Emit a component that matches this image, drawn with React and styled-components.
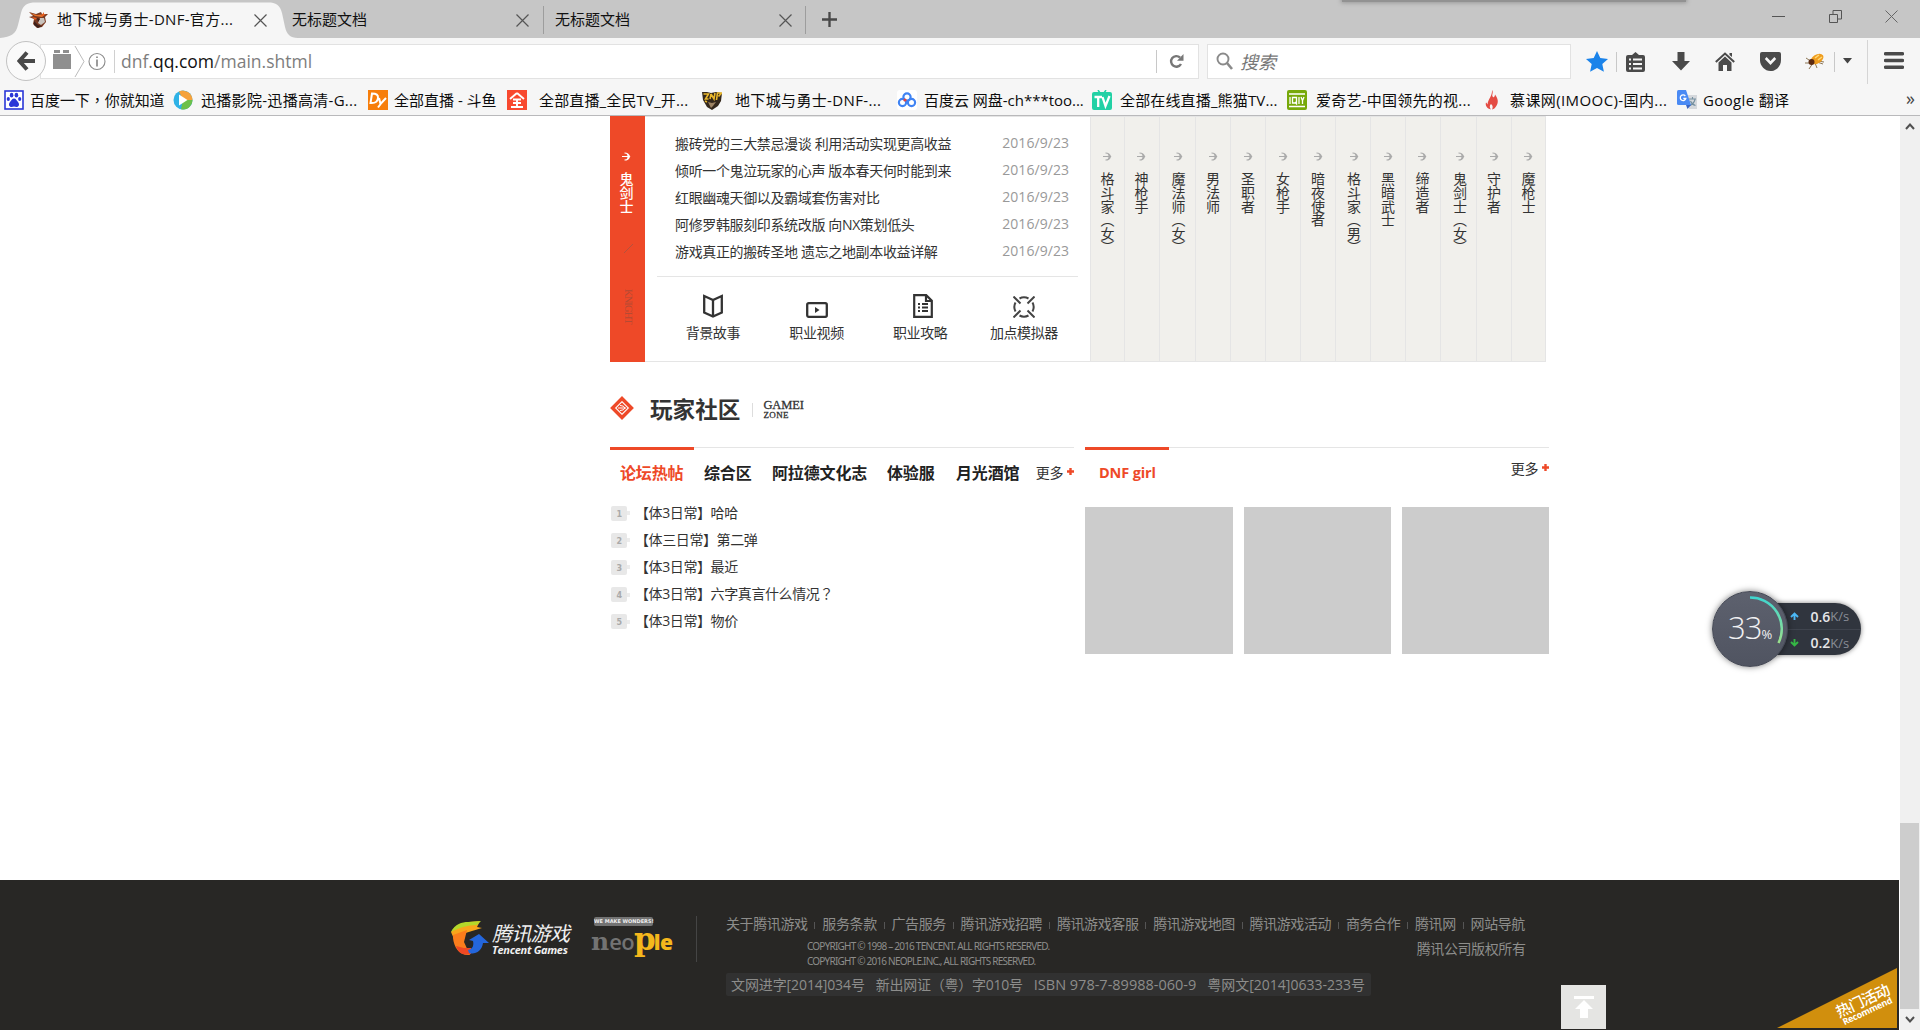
import React from "react";
import styled, { createGlobalStyle } from "styled-components";

const sans = `"Open Sans", "Noto Sans", "Noto Sans CJK SC", sans-serif`;
const RED = "#ee4928";

const Global = createGlobalStyle`
  * { box-sizing: border-box; }
  body { margin: 0; overflow: hidden; background: #fff; font-family: ${sans}; text-spacing-trim: space-all; }
  ul { list-style: none; margin: 0; padding: 0; }
  svg { display: block; flex: none; }
`;

const Window = styled.div`
  position: relative;
  width: 1920px;
  height: 1030px;
  overflow: hidden;
  display: flex;
  flex-direction: column;
  background: #fff;
  white-space: nowrap;
`;
/* Punctuation centred in its em box */
const Mid = styled.span`
  font-family: "Noto Sans CJK TC", sans-serif;
  line-height: 1;
`;

/* ---------- Tab strip ---------- */
const TabStrip = styled.header`
  height: 38px;
  flex: none;
  display: flex;
  background: #c6c6c6;
`;
const ActiveTab = styled.div`
  position: relative;
  width: 292px;
  height: 38px;
  padding: 2px 0 0 29px;
  display: flex;
  align-items: center;
  font-size: 15px;
`;
const TabShape = styled.svg`
  position: absolute;
  left: 0;
  top: 0;
`;
const TabTitle = styled.span`
  position: relative;
  width: ${(p) => p.$w}px;
  margin-left: ${(p) => p.$ml || 0}px;
  padding-bottom: 2px;
  letter-spacing: ${(p) => p.$ls || 0}px;
  color: #111;
  font-size: 15px;
  line-height: 22px;
`;
const Tab = styled.div`
  width: ${(p) => p.$w}px;
  height: 38px;
  padding: 2px 0 0 ${(p) => p.$pl}px;
  display: flex;
  align-items: center;
`;
const TabDivider = styled.i`
  width: 1px;
  height: 28px;
  margin-top: 6px;
  background: #9d9d9d;
`;
const NewTab = styled.div`
  padding: 12px 0 0 16px;
`;
const WindowButtons = styled.div`
  margin-left: auto;
  padding: 10px 22px 0 0;
  display: flex;
  gap: 43.5px;
`;
const TopShadow = styled.i`
  position: absolute;
  left: 1342px;
  top: -6px;
  width: 344px;
  height: 8px;
  background: #929292;
  box-shadow: 0 0 4px 1px #999;
`;

/* ---------- Navigation bar ---------- */
const NavBar = styled.div`
  height: 46px;
  flex: none;
  display: flex;
  background: #f6f6f6;
`;
const BackSlot = styled.div`
  width: 40px;
  padding: 3px 0 0 6px;
  position: relative;
  z-index: 1;
`;
const BackButton = styled.div`
  width: 40px;
  height: 40px;
  border: 1px solid #c2c2c2;
  border-radius: 50%;
  background: #fafafa;
  display: flex;
  align-items: center;
  justify-content: center;
`;
const UrlBar = styled.div`
  margin-top: 6px;
  width: 1159px;
  height: 35px;
  border: 1px solid #e2e2e2;
  background: #fff;
  display: flex;
  align-items: center;
  padding-left: 12px;
  padding-bottom: 1px;
`;
const VLine = styled.i`
  flex: none;
  width: 1px;
  height: ${(p) => p.$h}px;
  background: ${(p) => p.$c || "#c8c8c8"};
  margin: ${(p) => p.$m || 0};
`;
const Url = styled.span`
  margin-left: 6px;
  width: 1035px;
  font-size: 17.5px;
  letter-spacing: 0;
  line-height: 24px;
  color: #7d7d7d;
  b { font-weight: 400; color: #111; }
`;
const SearchBox = styled.div`
  margin: 6px 0 0 8px;
  width: 364px;
  height: 35px;
  border: 1px solid #e2e2e2;
  background: #fff;
  display: flex;
  align-items: center;
  padding: 0 0 1px 8px;
  gap: 7px;
  font-size: 18px;
  font-style: italic;
  color: #777;
`;
const Tools = styled.div`
  display: flex;
  align-items: center;
  padding: 1px 0 0 15px;
`;
const ToolIcon = styled.div`
  width: 22px;
  margin-left: ${(p) => p.$ml || 0}px;
  margin-right: ${(p) => p.$mr}px;
  display: flex;
  justify-content: center;
`;

/* ---------- Bookmarks ---------- */
const Bookmarks = styled.nav`
  height: 32px;
  flex: none;
  display: flex;
  align-items: center;
  padding-left: 4px;
  background: #f6f6f6;
  border-bottom: 1px solid #b9b9bb;
`;
const Bookmark = styled.a`
  width: ${(p) => p.$w}px;
  flex: none;
  display: flex;
  align-items: center;
  font-size: 15px;
  line-height: 24px;
  color: #0c0c0c;
  letter-spacing: ${(p) => p.$ls || 0}px;
  svg { margin-right: ${(p) => p.$gap}px; }
`;
const MoreMarks = styled.span`
  margin: -4px 0 0 39px;
  font-size: 18px;
  color: #444;
`;

/* ---------- Page ---------- */
const Viewport = styled.div`
  flex: 1;
  min-height: 0;
  display: flex;
`;
const Page = styled.main`
  width: 1900px;
  display: flex;
  flex-direction: column;
`;
const Scrollbar = styled.aside`
  width: 20px;
  padding: 7px 0 0;
  background: #f0f0f0;
  display: flex;
  flex-direction: column;
  align-items: center;
`;
const Thumb = styled.div`
  flex: none;
  width: 19px;
  height: 186px;
  margin: 693px 1px 7px 0;
  background: #cdcdcd;
`;
const Jobs = styled.section`
  height: 246px;
  margin-left: 610px;
  display: flex;
`;
const ActiveJob = styled.div`
  width: 35px;
  background: ${RED};
  display: flex;
  flex-direction: column;
  align-items: center;
  padding: 36px 2px 0 0;
  color: #fff;
`;
const Vertical = styled.span`
  writing-mode: vertical-rl;
  text-orientation: ${(p) => (p.$side ? "sideways" : "mixed")};
  font-size: ${(p) => p.$size || 14}px;
  line-height: 16px;
  letter-spacing: ${(p) => p.$ls ?? -0.4}px;
  margin: ${(p) => p.$m || "11px 0 0"};
  color: ${(p) => p.$c || "inherit"};
  font-weight: ${(p) => p.$weight || 400};
  font-family: ${(p) => (p.$serif ? `"Liberation Serif", serif` : `"Noto Sans CJK SC", sans-serif`)};
`;
const JobPanel = styled.div`
  width: 445px;
  border: solid #e5e5e5;
  border-width: 1px 0;
  padding: 12px 12px 0;
`;
const ArticleRow = styled.li`
  height: 27px;
  display: flex;
  justify-content: space-between;
  align-items: center;
  padding: 0 9px 0 18px;
  font-size: 14px;
  letter-spacing: -0.36px;
  color: #333;
  time { color: #999; letter-spacing: 0.05px; }
`;
const JobLinks = styled.div`
  display: flex;
  border-top: 1px solid #e5e5e5;
  margin-top: 12px;
  padding-left: 4px;
`;
const JobLink = styled.a`
  width: 103.7px;
  height: 66px;
  display: flex;
  flex-direction: column;
  align-items: center;
  justify-content: flex-end;
  font-size: 14px;
  line-height: 20px;
  letter-spacing: -0.4px;
  color: #333;
  svg { margin-bottom: 5px; margin-left: ${(p) => p.$shift}px; }
`;
const JobColumn = styled.div`
  width: ${(p) => p.$w}px;
  border: solid #e5e5e5;
  border-width: 1px 0 1px 1px;
  background: #f1f0ec;
  display: flex;
  flex-direction: column;
  align-items: center;
  padding: 35px ${(p) => Math.max(-p.$shift, 0)}px 0 ${(p) => Math.max(p.$shift, 0)}px;
  color: #333;
  &:last-child { border-right-width: 1px; }
`;

const SectionTitle = styled.h2`
  margin: 28px 0 0 610px;
  height: 36px;
  display: flex;
  align-items: center;
  font-size: 22.6px;
  font-weight: 700;
  color: #333;
`;
const TitleText = styled.span`
  margin: 0 12px 0 16px;
`;
const EnglishTitle = styled.span`
  margin: 3px 0 0 10px;
  display: flex;
  flex-direction: column;
  font: 12.5px/11px "Liberation Serif", serif;
  letter-spacing: -0.1px;
  -webkit-text-stroke: 0.3px #333;
  color: #333;
  small { font-size: 9px; line-height: 8px; letter-spacing: 0.4px; }
`;
const Community = styled.section`
  display: flex;
  gap: 11px;
  margin: 21px 0 0 610px;
`;
const Column = styled.div`
  width: 464px;
`;
const Tabs = styled.div`
  height: 60px;
  border-top: 1px solid #e5e5e5;
  display: flex;
  font-size: 16px;
  line-height: 24px;
  font-weight: 700;
  color: #222;
`;
const TabLabel = styled.span`
  margin-top: -1px;
  padding: ${(p) => (p.$on ? 11 : 14)}px 0 0 ${(p) => p.$pl}px;
  width: ${(p) => p.$w}px;
  font-size: ${(p) => p.$size || 16}px;
  letter-spacing: ${(p) => p.$ls ?? -0.15}px;
  ${(p) => p.$on && `border-top: 3px solid ${RED}; color: ${RED};`}
`;
const More = styled.span`
  margin-left: auto;
  padding-top: ${(p) => p.$pt}px;
  display: flex;
  align-items: flex-start;
  gap: 4px;
  font-size: 14px;
  line-height: 20px;
  font-weight: 400;
  letter-spacing: -0.4px;
  color: #333;
  svg { margin-top: 5px; }
`;
const Posts = styled.ul`
  margin-top: -7.5px;
`;
const Post = styled.li`
  height: 27.2px;
  display: flex;
  align-items: center;
  padding-left: 1px;
  font-size: 14px;
  line-height: 20px;
  letter-spacing: -0.4px;
  color: #333;
  span { margin-top: -1px; }
`;
const Rank = styled.i`
  width: 16px;
  height: 15px;
  margin-right: 8px;
  border-radius: 2px;
  background: #e8e8e8;
  color: #aaa;
  font: 700 8px/17px "DejaVu Sans", sans-serif;
  text-align: center;
`;
const Pointer = styled.i`
  width: 3px;
  height: 4px;
  margin-left: -8px;
  margin-right: 5px;
  background: #ececec;
`;
const Pictures = styled.div`
  display: flex;
  gap: 11px;
`;
const Picture = styled.div`
  width: ${(p) => p.$w}px;
  height: 147px;
  background: #ccc;
`;

/* ---------- Footer ---------- */
const Footer = styled.footer`
  margin-top: auto;
  height: 150px;
  width: 1899px;
  background: #282725;
  display: flex;
  padding: 34px 0 0 450px;
  color: #8d8d8b;
`;
const Logos = styled.div`
  display: flex;
  width: 246px;
  padding-top: 2px;
`;
const TencentName = styled.div`
  margin: 6px 0 0 2px;
  width: 80px;
  color: #f0f0f0;
  font: italic 400 20px/22px "Noto Sans CJK SC", sans-serif;
  letter-spacing: -0.7px;
  small { display: block; font: italic 700 11px/12px "Open Sans", sans-serif; letter-spacing: -0.3px; }
`;
const Neople = styled.div`
  margin: 1px 0 0 19px;
`;
const Balloon = styled.div`
  margin-left: 3px;
  width: 59px;
  height: 9px;
  border-radius: 2px;
  background: #737373;
  color: #eee;
  text-align: center;
  font: 700 5px/9px "DejaVu Sans", sans-serif;
`;
const Wordmark = styled.div`
  display: flex;
  align-items: baseline;
  height: 36px;
  margin-top: -4px;
  font: 600 22px/34px "Open Sans", sans-serif;
  color: #737373;
  letter-spacing: -0.6px;
  em { font: 700 25px/34px "DejaVu Serif", serif; letter-spacing: 0; }
  strong { color: #f5b81c; font-size: 21px; }
  strong:first-of-type { font: 700 31px/34px "DejaVu Serif", serif; letter-spacing: -2px; }
`;
const Legal = styled.div`
  width: 830px;
  padding-left: 29px;
`;
const FooterLinks = styled.div`
  display: flex;
  height: 20px;
  font-size: 14px;
  line-height: 20px;
  letter-spacing: -0.4px;
  a + a::before {
    content: "";
    display: inline-block;
    width: 1px;
    height: 7px;
    margin: 0 6.87px;
    background: #555;
  }
`;
const LegalRow = styled.div`
  display: flex;
  justify-content: space-between;
  width: 799.5px;
  padding: 5px 0 0 81px;
  height: 39px;
  font-size: 14px;
  line-height: 20px;
  letter-spacing: -0.4px;
`;
const Copyright = styled.div`
  font: 10px/15px "Noto Sans", sans-serif;
`;
const Line = styled.div`
  letter-spacing: ${(p) => p.$ls}px;
`;
const Licences = styled.div`
  width: 645px;
  height: 23px;
  border-radius: 2px;
  background: #313131;
  display: flex;
  justify-content: space-between;
  padding: 0 6px 0 5px;
  line-height: 23px;
`;
const Licence = styled.span`
  font-size: ${(p) => p.$size || 14}px;
  letter-spacing: ${(p) => p.$ls}px;
`;

/* ---------- Floating items ---------- */
const BackToTop = styled.div`
  position: absolute;
  left: 1561px;
  top: 985px;
  width: 45px;
  height: 44px;
  background: #e5e5e3;
  display: flex;
  align-items: center;
  justify-content: center;
`;
const Corner = styled.div`
  position: absolute;
  left: 1777px;
  top: 968px;
  width: 120px;
  height: 60px;
  background: #d18f0d;
  clip-path: polygon(100% 0, 100% 100%, 0 100%);
`;
const CornerText = styled.div`
  position: absolute;
  left: 56px;
  top: 24px;
  width: 62px;
  transform: rotate(-25deg);
  color: #fff;
  text-align: center;
  font: 500 15px/16px "Noto Sans CJK SC", sans-serif;
  letter-spacing: -0.8px;
  small { display: block; font: 700 9px/8px "Open Sans", sans-serif; letter-spacing: -0.3px; }
`;
const Monitor = styled.div`
  position: absolute;
  left: 1712px;
  top: 591px;
  width: 150px;
  height: 76px;
`;
const Speeds = styled.div`
  position: absolute;
  left: 38px;
  top: 12px;
  width: 111px;
  height: 52px;
  border-radius: 0 26px 26px 0;
  background: #30353e;
  box-shadow: 0 0 5px rgba(0, 0, 0, 0.5);
`;
const Speed = styled.div`
  height: 26px;
  padding-left: 40px;
  display: flex;
  align-items: center;
  font-size: 14px;
  font-weight: 600;
  color: #e6e6e8;
  & + & { border-top: 1px solid #3f444e; }
  svg { margin-right: 11.5px; }
  small { font-size: 13px; font-weight: 400; color: #898d96; letter-spacing: 0; }
`;
const Gauge = styled.div`
  position: absolute;
  left: 0;
  top: 0;
  width: 76px;
  height: 76px;
  border-radius: 50%;
  border: 1px solid #454955;
  background: linear-gradient(#5d616e, #505461);
  box-shadow: 0 0 6px rgba(0, 0, 0, 0.5);
  display: flex;
  align-items: baseline;
  padding: 11px 0 0 15px;
  color: #f1f1f3;
  font: 300 31px/48px "Open Sans", sans-serif;
  letter-spacing: -0.9px;
  small { font: 400 13px/20px "Open Sans", sans-serif; }
`;
const Arc = styled.svg`
  position: absolute;
  left: -1px;
  top: -1px;
`;

/* ---------- Icons ---------- */
const Raised = styled.svg`
  position: relative;
`;
const Spaced = styled.svg`
  margin: ${(p) => p.$m};
`;
const Close = ({ s = 13, c = "#555", w = 1.2 }) => (
  <Raised width={s} height={s} viewBox="0 0 13 13">
    <path d="M.5.5l12 12M12.5.5l-12 12" stroke={c} strokeWidth={w} />
  </Raised>
);
const Emblem = () => (
  <Raised width="20" height="18" viewBox="0 0 20 18">
    <path d="M0 1l7 2 5-2 1 2 6 0-3 3 1 5-4 5-5 1-4-4 1-5-5-2 4-1z" fill="#7a3a22" />
    <path d="M1 2l7 2 9-1-4 3-7-1z" fill="#e8742c" />
    <path d="M11 7l4 0 1 4-4 3-3-2z" fill="#c9c3bd" />
    <path d="M5 10l4 4 4 1-4 2-4-3zM8 7l3 1-2 3z" fill="#3d201a" />
    <path d="M12 5l3-4 0 4zM3 6l5 1-2 2z" fill="#e85d1e" />
  </Raised>
);
const Gold = () => (
  <svg width="20" height="20" viewBox="0 0 20 20">
    <path d="M0 2l5 0 4 1 5-1 6 1-1 8-3 5-6 4-5-3-4-7z" fill="#33271b" />
    <path d="M1.500 4h5l-3 5h3M9 4l-1 5M9 4l3 5 1-6M14.500 10l1-7h4l-3 3.500M3 11l2 1" fill="none" stroke="#e9b72c" strokeWidth="1.600" />
    <path d="M6 12l4 1 4-1-3 4-2 2z" fill="#9c8262" />
  </svg>
);
const Arrow = ({ c }) => (
  <svg width="9" height="9" viewBox="0 0 9 9">
    <path d="M0 4.5h7M2.5 1Q6.5 1 7.5 4.5 6.5 8 2.5 8M5 2.500l2.600 2L5 6.500" fill="none" stroke={c} strokeWidth="1.1" />
  </svg>
);
const Plus = ({ s = 7, c = RED, w = 2.4 }) => (
  <svg width={s} height={s} viewBox="0 0 7 7">
    <path d="M3.5 0v7M0 3.5h7" stroke={c} strokeWidth={w} />
  </svg>
);
const icons = {
  baidu: (
    <svg width="20" height="20" viewBox="0 0 20 20">
      <rect x="1" y="1" width="18" height="18" fill="#fff" stroke="#2a36d8" strokeWidth="1.6" />
      <g fill="#2a36d8">
        <ellipse cx="7.6" cy="5.2" rx="1.8" ry="2.4" /><ellipse cx="12.4" cy="5.2" rx="1.8" ry="2.4" />
        <ellipse cx="4.3" cy="9" rx="1.6" ry="2.1" /><ellipse cx="15.7" cy="9" rx="1.6" ry="2.1" />
        <path d="M10 8.4c2 0 2.500 2 4 3.600 2 2.500.8 5-1.500 5-1 0-1.600-.4-2.500-.4s-1.500.4-2.500.4c-2.300 0-3.500-2.500-1.500-5C7.500 10.400 8 8.400 10 8.400z" />
      </g>
    </svg>
  ),
  play: (
    <svg width="20" height="20" viewBox="0 0 20 20">
      <circle cx="10" cy="10" r="9.500" fill="#2eb2e6" />
      <path d="M6 1.500A9.500 9.500 0 0 1 19.500 10L10 10z" fill="#f5a23b" />
      <path d="M19.500 10A9.500 9.500 0 0 1 8 19.300L10 10z" fill="#6cc04a" />
      <path d="M6 4.500l8.500 5.500L6 15.500z" fill="#fff" />
    </svg>
  ),
  fish: (
    <svg width="20" height="20" viewBox="0 0 20 20">
      <rect width="20" height="20" fill="#f77e0b" />
      <path d="M4 3.500L2.500 13c5 .5 7-1 7.500-5 .3-3-1.500-4.500-6-4.500zM11 8l1.500 6L18 8M13 13.500l-3 4" fill="none" stroke="#fff" strokeWidth="2" />
    </svg>
  ),
  quan: (
    <svg width="20" height="20" viewBox="0 0 20 20">
      <rect width="20" height="20" fill="#f8492f" />
      <path d="M10 3L3 9M10 3l7 6M6 9.500h8M6 13h8M4 17h12M10 9.500V17" fill="none" stroke="#fff" strokeWidth="1.9" />
    </svg>
  ),
  dnf: <Gold />,
  cloud: (
    <svg width="20" height="20" viewBox="0 0 20 20">
      <rect width="20" height="20" rx="3" fill="#fff" />
      <g fill="none" strokeWidth="2.200" stroke="#3f83f3">
        <circle cx="10" cy="7" r="3.600" /><circle cx="5.500" cy="12.500" r="3.600" /><circle cx="14.500" cy="12.500" r="3.600" />
      </g>
      <circle cx="8" cy="10" r="1.600" fill="#e8453c" />
    </svg>
  ),
  panda: (
    <svg width="20" height="20" viewBox="0 0 20 20">
      <rect y="2" width="20" height="18" rx="2" fill="#22d1a5" />
      <path d="M8 3L6 0M12 3l2-3" stroke="#22d1a5" strokeWidth="1.500" />
      <path d="M2.500 7h7.500M6.200 7v10M10.500 7l3 9L17.500 6" fill="none" stroke="#fff" strokeWidth="2.300" />
    </svg>
  ),
  qiyi: (
    <svg width="20" height="20" viewBox="0 0 20 20">
      <rect width="20" height="20" rx="2" fill="#77a90a" />
      <path d="M2 4h16M2 16.500h16M3 7v7M5.500 7.500h4v5.500h-4zM8 12l2 2.500M12 7v7M14 7l1.500 3.500L17 7M15.500 10.500V14" fill="none" stroke="#fff" strokeWidth="1.300" />
    </svg>
  ),
  fire: (
    <svg width="18" height="20" viewBox="0 0 18 20">
      <path d="M8 0c2 3-1 5 1 7 1 1 2-1 2-2.500 3 4 4 8 1 12-1 1.500-2 2.500-4 3 1-2 1-4-1-5.500C5 16 6 18 7 19.500c-4-1-6-4-5-7 1 .8 1 1 1.500 2C4 9 8.500 6 8 0z" fill="#e44b43" />
    </svg>
  ),
  translate: (
    <svg width="20" height="20" viewBox="0 0 20 20">
      <path d="M8 5h12v14H12z" fill="#d5d8dc" />
      <path d="M12 9h7M15.500 7v2M18 9.500c-1 4-3 5-5 6M13.500 11c1 2.500 3 4 5 4.500" fill="none" stroke="#7590a0" strokeWidth="1.100" />
      <path d="M1.500 0H9l5 15H1.500Q0 15 0 13.500v-12Q0 0 1.500 0z" fill="#4a8af4" />
      <path d="M9 15h5l-3.500 4z" fill="#3763c4" />
      <path d="M8.300 6A2.800 2.800 0 1 0 8.800 8.500H6.300" fill="none" stroke="#fff" strokeWidth="1.300" />
    </svg>
  ),
};

const bookmarks = [
  ["baidu", <span>百度一下<Mid>，</Mid>你就知道</span>, 169, 6, -0.05],
  ["play", "迅播影院-迅播高清-G...", 195, 8, 0.3],
  ["fish", "全部直播 - 斗鱼", 139, 6, 0],
  ["quan", "全部直播_全民TV_开...", 195, 12, 0.15],
  ["dnf", "地下城与勇士-DNF-...", 195, 13, 0.35],
  ["cloud", "百度云 网盘-ch***too...", 195, 7, -0.02],
  ["panda", "全部在线直播_熊猫TV...", 195, 8, 0.15],
  ["qiyi", "爱奇艺-中国领先的视...", 197, 9, 0.25],
  ["fire", "慕课网(IMOOC)-国内...", 193, 8, 0.4],
  ["translate", "Google 翻译", 190, 6, 0.35],
];
const articles = [
  "搬砖党的三大禁忌漫谈 利用活动实现更高收益",
  "倾听一个鬼泣玩家的心声 版本春天何时能到来",
  "红眼幽魂天御以及霸域套伤害对比",
  "阿修罗韩服刻印系统改版 向NX策划低头",
  "游戏真正的搬砖圣地 遗忘之地副本收益详解",
];
const jobs = [
  ["格斗家（女）", 34, 0], ["神枪手", 35, -1], ["魔法师（女）", 36, 2], ["男法师", 35, 0],
  ["圣职者", 35, 0], ["女枪手", 35, 0], ["暗夜使者", 35, 0], ["格斗家（男）", 35, 2],
  ["黑暗武士", 35, 0], ["缔造者", 35, -1], ["鬼剑士（女）", 36, 3], ["守护者", 35, 0], ["魔枪士", 35, 0],
];
const jobLinks = [
  ["背景故事", <svg width="20" height="24" viewBox="0 0 20 24"><path d="M1.200 2L10 6l8.800-4v16.500L10 22.500l-8.800-4zM10 6v16" fill="none" stroke="#333" strokeWidth="2.300" /></svg>, 0],
  ["职业视频", <svg width="22" height="16" viewBox="0 0 22 16"><rect x="1.200" y="1.200" width="19.600" height="13.600" rx="1.500" fill="none" stroke="#333" strokeWidth="2.300" /><path d="M9 5l4.500 3L9 11z" fill="#333" /></svg>, 0],
  ["职业攻略", <svg width="20" height="24" viewBox="0 0 20 24"><path d="M1.200 1.200h12l5.600 5.500v16.100H1.200zM13 1v6h6" fill="none" stroke="#333" strokeWidth="2.200" /><path d="M5 10h2M9 10h6M5 13.500h2M9 13.500h6M5 17h2M9 17h6" stroke="#333" strokeWidth="1.800" /></svg>, 6],
  ["加点模拟器", <svg width="22" height="22" viewBox="0 0 22 22"><path d="M6.500 2.500a9.500 9.500 0 0 1 9 0M19.500 6.500a9.500 9.500 0 0 1 0 9M15.500 19.500a9.500 9.500 0 0 1-9 0M2.500 15.500a9.500 9.500 0 0 1 0-9M.5.500l7 7M21.500.500l-7 7M.5 21.500l7-7M21.500 21.500l-7-7" fill="none" stroke="#444" strokeWidth="2" /></svg>, 0],
];
const posts = ["【体3日常】哈哈", "【体三日常】第二弹", "【体3日常】最近", <>【体3日常】六字真言什么情况<Mid>？</Mid></>, "【体3日常】物价"];
const footerLinks = ["关于腾讯游戏", "服务条款", "广告服务", "腾讯游戏招聘", "腾讯游戏客服", "腾讯游戏地图", "腾讯游戏活动", "商务合作", "腾讯网", "网站导航"];

export default function App() {
  return (
    <Window>
      <Global />
      <TabStrip>
        <ActiveTab>
          <TabShape width="300" height="38" viewBox="0 0 300 38">
            <path d="M0 38C11 37 16 34 18 25L21 13C23 5 27 2.500 36 2.500H268C276 2.500 280 5 282 13L285 27C287 35 290 37.500 298 38z" fill="#f6f6f6" />
          </TabShape>
          <Emblem />
          <TabTitle $ml={8} $w={197} $ls={0.3}>地下城与勇士-DNF-官方...</TabTitle>
          <Close />
        </ActiveTab>
        <Tab $w={251} $pl={0}><TabTitle $w={224}>无标题文档</TabTitle><Close /></Tab>
        <TabDivider />
        <Tab $w={261} $pl={11}><TabTitle $w={224}>无标题文档</TabTitle><Close /></Tab>
        <TabDivider />
        <NewTab><Plus s={15} c="#484848" w={1.1} /></NewTab>
        <WindowButtons>
          <svg width="13" height="13"><path d="M0 6.500h13" stroke="#555" /></svg>
          <svg width="13" height="13"><path d="M.5 4.500h8v8h-8zM4 4V.5h8.500V9H9" fill="none" stroke="#555" /></svg>
          <Close c="#666" w={1} />
        </WindowButtons>
      </TabStrip>
      <TopShadow />

      <NavBar>
        <BackSlot>
          <BackButton>
            <svg width="18" height="20" viewBox="0 0 18 20"><path d="M10 1.500L2.500 10l7.500 8.500M3 10h15" fill="none" stroke="#484848" strokeWidth="4" /></svg>
          </BackButton>
        </BackSlot>
        <UrlBar>
          <svg width="62" height="31" viewBox="0 0 62 31">
            <path d="M0 8h18v15H0zM1 4h6v3H1zM10 4h6v3h-6z" fill="#8f8f8f" />
            <path d="M22 0l9 15.500L22 31" fill="none" stroke="#bbb" />
            <circle cx="44" cy="15.500" r="8" fill="none" stroke="#8b8b8b" strokeWidth="1.100" />
            <path d="M44 13.500v7M44 10.500v1.600" stroke="#8b8b8b" strokeWidth="1.700" />
            <path d="M61.500 4v23" stroke="#d0d0d0" />
          </svg>
          <Url>dnf.<b>qq.com</b>/main.shtml</Url>
          <VLine $h={23} />
          <Spaced $m="0 0 0 12px" width="15" height="15" viewBox="0 0 15 15">
            <path d="M12 10A5.300 5.300 0 1 1 11 3.500" fill="none" stroke="#777" strokeWidth="2.400" /><path d="M14.500 0v6.800H8z" fill="#777" />
          </Spaced>
        </UrlBar>
        <SearchBox>
          <svg width="17" height="18" viewBox="0 0 17 18"><circle cx="7" cy="7" r="5.500" fill="none" stroke="#8a8a8a" strokeWidth="1.900" /><path d="M11 11l5 6" stroke="#8a8a8a" strokeWidth="2.600" /></svg>
          搜索
        </SearchBox>
        <Tools>
          <ToolIcon $mr={8}><svg width="22" height="21" viewBox="0 0 22 21"><path d="M11 0l3.300 7 7.700.9-5.700 5.200 1.600 7.600L11 17l-6.900 3.700 1.600-7.600L0 7.900 7.700 7z" fill="#1a83ea" /></svg></ToolIcon>
          <VLine $h={20} />
          <ToolIcon $ml={7} $mr={24}><svg width="19" height="20" viewBox="0 0 19 20"><path d="M2 3h4L9.500 0 13 3h4q2 0 2 2v13q0 2-2 2H2q-2 0-2-2V5q0-2 2-2z" fill="#4a4a4a" /><path d="M3 7.500h2M7 7.500h9M3 12h2M7 12h9M3 16.500h2M7 16.500h9" stroke="#f6f6f6" strokeWidth="2" /></svg></ToolIcon>
          <ToolIcon $mr={22}><svg width="18" height="20" viewBox="0 0 18 20"><path d="M5.500 0h7v9H18l-9 9.500L0 9h5.500z" fill="#4a4a4a" /></svg></ToolIcon>
          <ToolIcon $mr={23}><svg width="20" height="19" viewBox="0 0 20 19"><path d="M.8 10L10 1.500 19.200 10" fill="none" stroke="#4a4a4a" strokeWidth="2" /><path d="M3.500 10.500L10 4.500l6.500 6V19H12v-6H8v6H3.500zM14.500 1H17v4l-2.500-2z" fill="#4a4a4a" /></svg></ToolIcon>
          <ToolIcon $mr={23}><svg width="21" height="19" viewBox="0 0 22 19" preserveAspectRatio="none"><path d="M2 0h18q2 0 2 2v6c0 6-5 11-11 11S0 14 0 8V2q0-2 2-2z" fill="#4a4a4a" /><path d="M6 6l5 5 5-5" fill="none" stroke="#f6f6f6" strokeWidth="2.700" /></svg></ToolIcon>
          <ToolIcon $mr={8}><svg width="20" height="17" viewBox="0 0 20 17"><path d="M1 5l6 4M0 10h6M4 16l4-6M12 15l-2-5M19 9l-6-1M18 11l-6-2" stroke="#8c7656" /><ellipse cx="12" cy="6" rx="7" ry="4.500" transform="rotate(-32 12 6)" fill="#ef9d1f" /><path d="M10 5l4-3M13 7l4-3" stroke="#ffd977" strokeWidth="1.500" /><circle cx="6.500" cy="9" r="3" fill="#5d2b12" /></svg></ToolIcon>
          <VLine $h={20} />
          <Spaced $m="-2px 0 0 8px" width="9" height="6"><path d="M0 0h9L4.500 5.500z" fill="#444" /></Spaced>
          <VLine $h={44} $c="#d5d5d5" $m="0 0 0 15px" />
          <Spaced $m="-2px 0 0 16px" width="20" height="17" viewBox="0 0 20 17"><path d="M1.500 1.700h17M1.500 8.500h17M1.500 15.300h17" stroke="#4a4a4a" strokeWidth="3.400" strokeLinecap="round" /></Spaced>
        </Tools>
      </NavBar>

      <Bookmarks>
        {bookmarks.map(([icon, text, w, gap, ls]) => (
          <Bookmark key={icon} $w={w} $gap={gap} $ls={ls}>{icons[icon]}{text}</Bookmark>
        ))}
        <MoreMarks>»</MoreMarks>
      </Bookmarks>

      <Viewport>
        <Page>
          <Jobs>
            <ActiveJob>
              <Arrow c="#fff" />
              <Vertical $weight={500}>鬼剑士</Vertical>
              <Spaced $m="31px 0 0 4px" width="9" height="9"><path d="M0 9L9 0" stroke="#b5513c" /></Spaced>
              <Vertical $side $serif $size={10.5} $ls={-0.9} $c="#b54a34" $m="36px 0 0 3px">KNIGHT</Vertical>
            </ActiveJob>
            <JobPanel>
              <ul>
                {articles.map((a) => <ArticleRow key={a}><span>{a}</span><time>2016/9/23</time></ArticleRow>)}
              </ul>
              <JobLinks>
                {jobLinks.map(([label, icon, shift]) => <JobLink key={label} $shift={shift}>{icon}{label}</JobLink>)}
              </JobLinks>
            </JobPanel>
            {jobs.map(([name, w, shift]) => (
              <JobColumn key={name} $w={w} $shift={shift}><Arrow c="#aaa" /><Vertical>{name}</Vertical></JobColumn>
            ))}
          </Jobs>

          <SectionTitle>
            <svg width="24" height="24" viewBox="0 0 24 24"><path d="M12 2.500L21.500 12 12 21.500 2.500 12z" fill="#fff" stroke={RED} strokeWidth="3.400" /><path d="M12 6.500l5.500 5.500-5.500 5.500L6.500 12z" fill={RED} /><path d="M8 12h8M10 9.500q4 0 5 2.500-1 2.500-5 2.500" fill="none" stroke="#fff" /></svg>
            <TitleText>玩家社区</TitleText>
            <VLine $h={14} $c="#ddd" $m="4px 0 0" />
            <EnglishTitle>GAMEI<small>ZONE</small></EnglishTitle>
          </SectionTitle>

          <Community>
            <Column>
              <Tabs>
                <TabLabel $on $w={84} $pl={10}>论坛热帖</TabLabel>
                <TabLabel $w={68} $pl={10}>综合区</TabLabel>
                <TabLabel $w={115} $pl={10}>阿拉德文化志</TabLabel>
                <TabLabel $w={69} $pl={10}>体验服</TabLabel>
                <TabLabel $w={80} $pl={10}>月光酒馆</TabLabel>
                <More $pt={15}>更多<Plus /></More>
              </Tabs>
              <Posts>
                {posts.map((t, i) => <Post key={i}><Rank>{i + 1}</Rank><Pointer /><span>{t}</span></Post>)}
              </Posts>
            </Column>
            <Column>
              <Tabs>
                <TabLabel $on $w={84} $pl={14} $size={14.5} $ls={-0.15}>DNF girl</TabLabel>
                <More $pt={11}>更多<Plus /></More>
              </Tabs>
              <Pictures><Picture $w={148} /><Picture $w={147} /><Picture $w={147} /></Pictures>
            </Column>
          </Community>

          <Footer>
            <Logos>
              <svg width="40" height="42" viewBox="0 0 40 42">
                <path d="M1 16C5 9 12 8 19 6l11-1-3 6 5 1-10 3C14 17 8 20 4 23z" fill="#f9a51b" />
                <path d="M1 16C5 8 12 6 18 6L31 5l-4 4C17 9 9 12 1 16z" fill="#b4d82a" />
                <path d="M3 19l14-5-3 12 6 13C9 40 4 31 3 22z" fill="#fb7d1c" />
                <path d="M14 32l7 0 0 6C11 40 8 36 6 30z" fill="#ef4824" />
                <path d="M18 34c5-1 6-5 5-9l-4-1 10-6 10 9-6 0c-1 8-8 12-14 10z" fill="#2466dc" />
              </svg>
              <TencentName>腾讯游戏<small>Tencent Games</small></TencentName>
              <Neople>
                <Balloon>WE MAKE WONDERS!</Balloon>
                <Wordmark><em>n</em>eo<strong>p</strong><strong>le</strong></Wordmark>
              </Neople>
            </Logos>
            <VLine $h={46} $c="#454545" $m="2px 0 0" />
            <Legal>
              <FooterLinks>{footerLinks.map((l) => <a key={l}>{l}</a>)}</FooterLinks>
              <LegalRow>
                <Copyright>
                  <Line $ls={-0.78}>COPYRIGHT © 1998 – 2016 TENCENT. ALL RIGHTS RESERVED.</Line>
                  <Line $ls={-0.79}>COPYRIGHT © 2016 NEOPLE.INC., ALL RIGHTS RESERVED.</Line>
                </Copyright>
                <span>腾讯公司版权所有</span>
              </LegalRow>
              <Licences>
                <Licence $ls={-0.1}>文网进字[2014]034号</Licence>
                <Licence $ls={-0.25}>新出网证（粤）字010号</Licence>
                <Licence $size={14.5} $ls={0}>ISBN 978-7-89988-060-9</Licence>
                <Licence $ls={0}>粤网文[2014]0633-233号</Licence>
              </Licences>
            </Legal>
          </Footer>
        </Page>
        <Scrollbar>
          <svg width="10" height="7"><path d="M1 6l4-4.500L9 6" fill="none" stroke="#505050" strokeWidth="2" /></svg>
          <Thumb />
          <svg width="10" height="7"><path d="M1 1l4 4.500L9 1" fill="none" stroke="#505050" strokeWidth="2" /></svg>
        </Scrollbar>
      </Viewport>

      <BackToTop>
        <svg width="20" height="22" viewBox="0 0 20 22"><path d="M0 0h20v3H0zM10 4l9 9h-5v9H6v-9H1z" fill="#fff" /></svg>
      </BackToTop>
      <Corner><CornerText>热门活动<small>Recommend</small></CornerText></Corner>
      <Monitor>
        <Speeds>
          <Speed><svg width="9" height="8" viewBox="0 0 9 8"><path d="M4.500 8V1.500M1 5l3.500-3.500L8 5" fill="none" stroke="#4cb8f5" strokeWidth="1.900" /></svg>0.6<small>K/s</small></Speed>
          <Speed><svg width="9" height="8" viewBox="0 0 9 8"><path d="M4.500 0v6.500M1 3l3.500 3.500L8 3" fill="none" stroke="#35b845" strokeWidth="1.900" /></svg>0.2<small>K/s</small></Speed>
        </Speeds>
        <Gauge>
          33<small>%</small>
          <Arc width="76" height="76" viewBox="0 0 76 76">
            <defs><linearGradient id="arc" x1="0" y1="0" x2="0" y2="1"><stop offset="0" stopColor="#3fd6cf" /><stop offset="1" stopColor="#9be08c" /></linearGradient></defs>
            <path d="M38 6.500A31.500 31.500 0 0 1 66.500 52" fill="none" stroke="url(#arc)" strokeWidth="2.500" />
          </Arc>
        </Gauge>
      </Monitor>
    </Window>
  );
}
